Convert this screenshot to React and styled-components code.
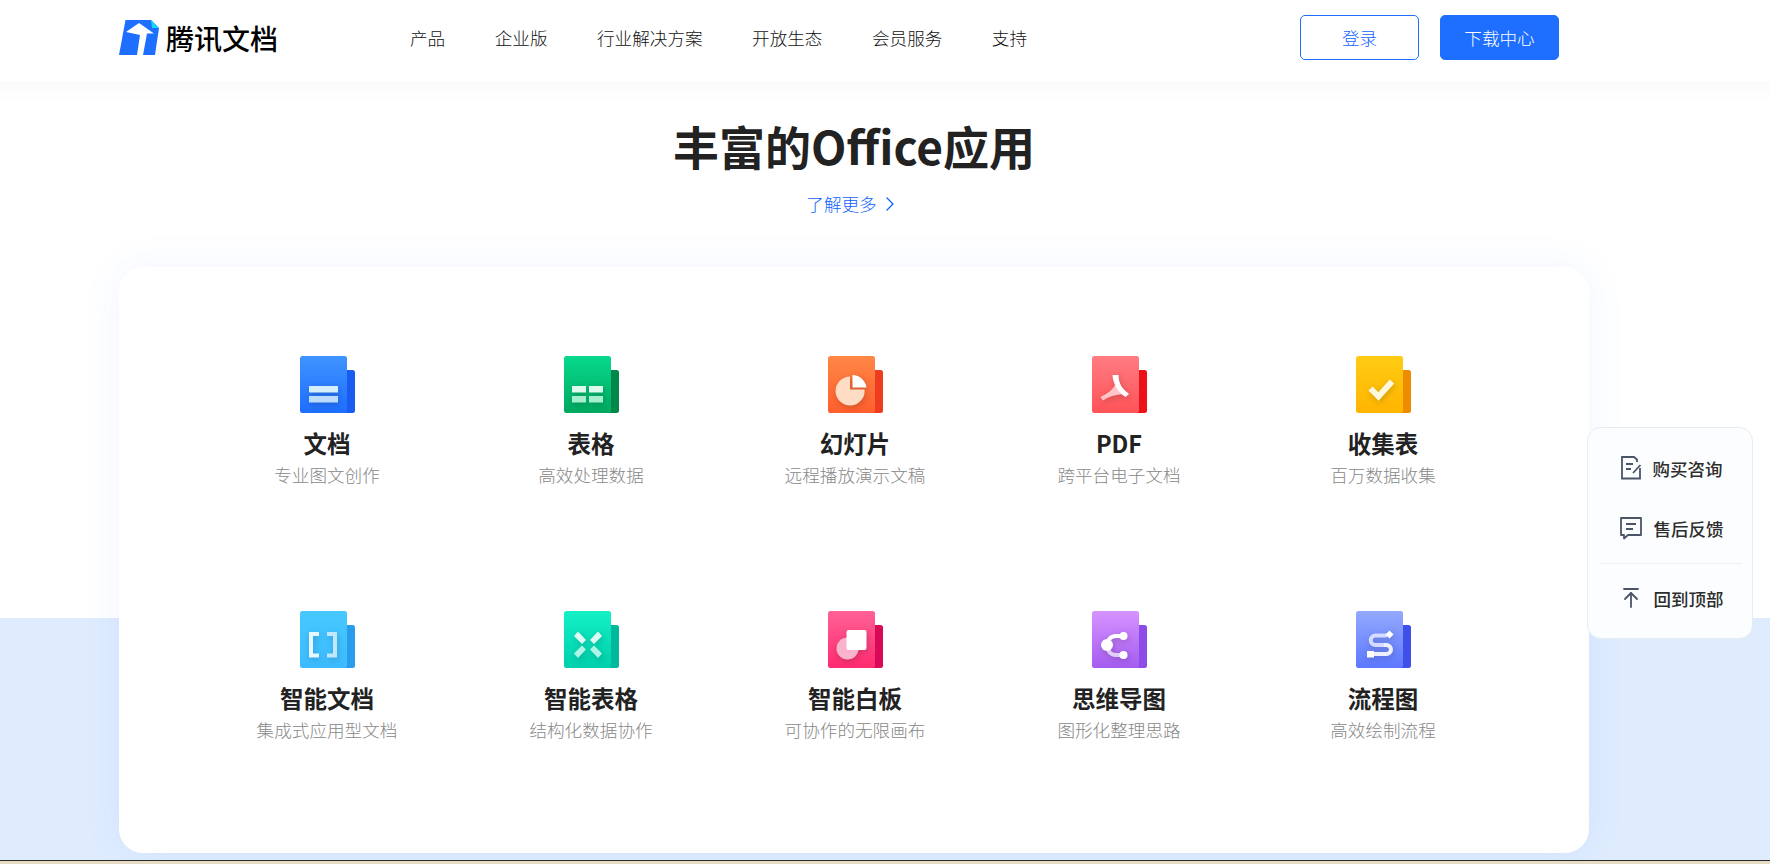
import styled, { createGlobalStyle } from 'styled-components';
import { ChevronRight, ArrowUpToLine } from 'lucide-react';

const NAV = ['产品', '企业版', '行业解决方案', '开放生态', '会员服务', '支持'];

const APPS = [
  { id: 'doc', name: '文档', desc: '专业图文创作', top: '#3f93ff', bottom: '#1e6eff', back: '#1a5cf0' },
  { id: 'sheet', name: '表格', desc: '高效处理数据', top: '#07d98d', bottom: '#00a95f', back: '#00874a' },
  { id: 'slide', name: '幻灯片', desc: '远程播放演示文稿', top: '#ff8745', bottom: '#ff5f2e', back: '#ee3c20' },
  { id: 'pdf', name: 'PDF', desc: '跨平台电子文档', top: '#ff7c82', bottom: '#ff5357', back: '#ec1018' },
  { id: 'form', name: '收集表', desc: '百万数据收集', top: '#ffcc14', bottom: '#ffb400', back: '#ee8c00' },
  { id: 'smartdoc', name: '智能文档', desc: '集成式应用型文档', top: '#47c8ff', bottom: '#3cbcff', back: '#2a9cec' },
  { id: 'smartsheet', name: '智能表格', desc: '结构化数据协作', top: '#14f0c6', bottom: '#00cfac', back: '#00b89c' },
  { id: 'board', name: '智能白板', desc: '可协作的无限画布', top: '#ff6196', bottom: '#ff2b70', back: '#d80a58' },
  { id: 'mind', name: '思维导图', desc: '图形化整理思路', top: '#d693ff', bottom: '#a55cf0', back: '#8c4ce8' },
  { id: 'flow', name: '流程图', desc: '高效绘制流程', top: '#93a9ff', bottom: '#5d78ff', back: '#3f50e8' },
];

const GLYPHS = {
  doc: (
    <>
      <rect x="9" y="30" width="29" height="6.5" fill="#d6efff" />
      <rect x="9" y="40" width="29" height="6.5" fill="#bcdcff" />
    </>
  ),
  sheet: (
    <>
      <rect x="8" y="30" width="14" height="6.5" fill="#dcfbee" />
      <rect x="25" y="30" width="14" height="6.5" fill="#dcfbee" />
      <rect x="8" y="40" width="14" height="6.5" fill="#a5eed0" />
      <rect x="25" y="40" width="14" height="6.5" fill="#a5eed0" />
    </>
  ),
  slide: (
    <>
      <path d="M22 20.5V33.5H36.5A14.5 14.5 0 1 1 22 20.5Z" fill="#ffdcc4" />
      <path d="M24.5 19A14.5 14.5 0 0 1 38.5 31.5H24.5Z" fill="#fff" />
    </>
  ),
  pdf: (
    <>
      <path d="M24 27L37 38C29 38 18 39 11 44.5L8.5 41C15 38 21 34 24 27Z" fill="#ffc4c7" />
      <path d="M20.5 19H26.5C26.5 27 30 33 37 38L33.5 41C26 36 21 28 20.5 19Z" fill="#fff" />
    </>
  ),
  form: <path d="M14.5 32.5L22.5 40.5L36 25.5" fill="none" stroke="#fff8dc" strokeWidth="6" />,
  smartdoc: (
    <>
      <path d="M19 23H11V44.5H19" fill="none" stroke="#e6f7ff" strokeWidth="4" />
      <path d="M27 23H35V44.5H27" fill="none" stroke="#bfe8ff" strokeWidth="4" />
    </>
  ),
  smartsheet: (
    <>
      <path d="M10 25L14 20.5L22 29L18 33Z" fill="#dffcf4" />
      <path d="M38 25L34 20.5L26 29L30 33Z" fill="#dffcf4" />
      <path d="M10 42.5L14 47L22 38.5L18 34.5Z" fill="#aef5e8" />
      <path d="M38 42.5L34 47L26 38.5L30 34.5Z" fill="#aef5e8" />
    </>
  ),
  board: (
    <>
      <ellipse cx="19.5" cy="37.5" rx="11" ry="11" fill="#f9b3cc" />
      <rect x="18.5" y="19" width="20" height="20" rx="2" fill="#fff" />
    </>
  ),
  mind: (
    <>
      <path d="M31 25H24C18 25 15 30 15 34" fill="none" stroke="#fff" strokeWidth="4" />
      <path d="M15 34C15 39 18 44 24 44H31" fill="none" stroke="#e0cffa" strokeWidth="4" />
      <circle cx="31.5" cy="25" r="4" fill="#fff" />
      <circle cx="31.5" cy="44" r="4" fill="#fff" />
      <circle cx="15" cy="34" r="6" fill="#fff" />
    </>
  ),
  flow: (
    <>
      <path d="M31 24.5H19.5A4.7 4.7 0 0 0 19.5 34H28" fill="none" stroke="#d5dcff" strokeWidth="4" />
      <path d="M28 34H30.5A4.5 4.5 0 0 1 30.5 43H17" fill="none" stroke="#eef0ff" strokeWidth="4" />
      <path d="M33.5 19.5L37.5 23.5L33.5 27.5L29.5 23.5Z" fill="#fff" />
      <rect x="11" y="40" width="7" height="6.5" fill="#fff" />
    </>
  ),
};

const GlobalStyle = createGlobalStyle`
  html, body {
    margin: 0;
    padding: 0;
    background: #fff;
  }
  body {
    font-family: "Noto Sans CJK SC", "Noto Sans", sans-serif;
    color: #222;
  }
`;

const Page = styled.div`
  height: 864px;
  overflow: hidden;
  display: flex;
  flex-direction: column;
`;

const Header = styled.header`
  flex: 0 0 82px;
  box-sizing: border-box;
  display: flex;
  align-items: center;
  padding: 0 0 7px 119px;
  background: #fff;
`;

const Brand = styled.div`
  display: flex;
  align-items: center;
  gap: 7px;
  width: 291px;
`;

const BrandName = styled.span`
  font-size: 28px;
  line-height: 36px;
  color: #000;
  font-weight: 500;
`;

const Nav = styled.nav`
  display: flex;
  gap: 49.5px;
  width: 890px;
`;

const NavLink = styled.a`
  font-size: 17.6px;
  font-weight: 300;
  color: #111;
`;

const HeaderButton = styled.button`
  width: 119px;
  height: 45px;
  margin-right: 21px;
  padding: 0;
  border: 1px solid #1e6fff;
  border-radius: 5px;
  font: inherit;
  font-size: 17.6px;
  font-weight: 300;
  color: ${p => (p.$primary ? '#fff' : '#0f62ff')};
  background: ${p => (p.$primary ? '#1e6fff' : '#fff')};
`;

const Main = styled.main`
  flex: 1;
  display: flex;
  background: linear-gradient(#fafafa 0, #fff 20px, #fff 536px, #dfecfe 536px);
  padding-left: 119px;
`;

const Content = styled.div`
  width: 1470px;
  display: flex;
  flex-direction: column;
  align-items: center;
`;

const Title = styled.h1`
  margin: 31px 0 0;
  font-size: 46px;
  line-height: 64px;
  font-weight: 700;
  color: #222;
`;

const MoreLink = styled.a`
  display: flex;
  align-items: center;
  gap: 1px;
  margin-top: 14px;
  font-size: 17.6px;
  line-height: 26px;
  font-weight: 300;
  color: #0f62ff;
`;

const Card = styled.section`
  box-sizing: border-box;
  width: 1470px;
  height: 586px;
  margin-top: 50px;
  padding: 89px 74px 0 76px;
  display: grid;
  grid-template-columns: repeat(5, 264px);
  grid-auto-rows: 255px;
  background: #fff;
  border-radius: 24px;
  box-shadow: 0 0 40px rgba(40, 110, 255, 0.07);
`;

const AppItem = styled.div`
  display: flex;
  flex-direction: column;
  align-items: center;
`;

const AppName = styled.div`
  margin-top: 13px;
  font-size: 23.5px;
  line-height: 34px;
  font-weight: 700;
  color: #222;
`;

const AppDesc = styled.div`
  margin-top: 2px;
  font-size: 17.6px;
  line-height: 26px;
  font-weight: 300;
  color: #888;
`;

const Glyph = styled.g`
  filter: drop-shadow(1px 2px 3px rgba(0, 0, 0, 0.18));
`;

const Strip = styled.div`
  flex: 0 0 4px;
  border-top: 1px solid #2b2b2b;
  box-sizing: border-box;
  background: #e6dcc4;
`;

const FloatPanel = styled.aside`
  position: fixed;
  top: 427px;
  left: 1587px;
  box-sizing: border-box;
  width: 166px;
  height: 212px;
  padding: 10px 11px 0 13px;
  background: #fcfdfe;
  border: 1px solid #e8ebf0;
  border-radius: 14px;
`;

const FloatRow = styled.div`
  height: ${p => p.$height}px;
  display: flex;
  align-items: center;
  justify-content: center;
  gap: 11px;
  font-size: 17.5px;
  font-weight: 500;
  color: #2d2d2d;
`;

const FloatDivider = styled.div`
  height: 1px;
  margin: 5px -1px 0 -1px;
  background: #eef0f3;
`;

function AppIcon({ app }) {
  return (
    <svg width="55" height="57" viewBox="0 0 55 57">
      <defs>
        <linearGradient id={`front-${app.id}`} x1="0" y1="0" x2="0" y2="1">
          <stop offset="0" stopColor={app.top} />
          <stop offset="1" stopColor={app.bottom} />
        </linearGradient>
      </defs>
      <rect x="38" y="14" width="17" height="43" rx="2.5" fill={app.back} />
      <rect width="47" height="57" rx="2.5" fill={`url(#front-${app.id})`} />
      <Glyph>{GLYPHS[app.id]}</Glyph>
    </svg>
  );
}

function Logo() {
  return (
    <svg width="40" height="35" viewBox="0 0 40 35">
      <path d="M6.5 0H32L40 8L36 35H0Z" fill="#1e6fff" />
      <path d="M32 0L40 8H33Z" fill="#16d6f5" />
      <path d="M20 3L35 13.5H28L24 35H18L21 15L7 12Z" fill="#fff" />
    </svg>
  );
}

function BuyIcon() {
  return (
    <svg width="22" height="24" viewBox="0 0 22 24" fill="none" stroke="#4a5568" strokeWidth="1.8">
      <path d="M17 6V3.5L14 1H2V22.5H20V12" />
      <path d="M6 8H13M6 13H11" />
      <path d="M13 17L20.5 9" />
    </svg>
  );
}

function ChatIcon() {
  return (
    <svg width="24" height="24" viewBox="0 0 24 24" fill="none" stroke="#4a5568" strokeWidth="1.8">
      <path d="M2 2H22V19H9L5 22.5V19H2Z" strokeLinejoin="round" />
      <path d="M7 8H17M7 13H14" />
    </svg>
  );
}

export default function App() {
  return (
    <Page>
      <GlobalStyle />
      <Header>
        <Brand>
          <Logo />
          <BrandName>腾讯文档</BrandName>
        </Brand>
        <Nav>
          {NAV.map(item => <NavLink key={item}>{item}</NavLink>)}
        </Nav>
        <HeaderButton>登录</HeaderButton>
        <HeaderButton $primary>下载中心</HeaderButton>
      </Header>
      <Main>
        <Content>
          <Title>丰富的Office应用</Title>
          <MoreLink>了解更多 <ChevronRight size={24} strokeWidth={1.3} /></MoreLink>
          <Card>
            {APPS.map(app => (
              <AppItem key={app.id}>
                <AppIcon app={app} />
                <AppName>{app.name}</AppName>
                <AppDesc>{app.desc}</AppDesc>
              </AppItem>
            ))}
          </Card>
        </Content>
      </Main>
      <Strip />
      <FloatPanel>
        <FloatRow $height={60}><BuyIcon />购买咨询</FloatRow>
        <FloatRow $height={60}><ChatIcon />售后反馈</FloatRow>
        <FloatDivider />
        <FloatRow $height={68}><ArrowUpToLine size={24} color="#4a5568" strokeWidth={1.8} />回到顶部</FloatRow>
      </FloatPanel>
    </Page>
  );
}
